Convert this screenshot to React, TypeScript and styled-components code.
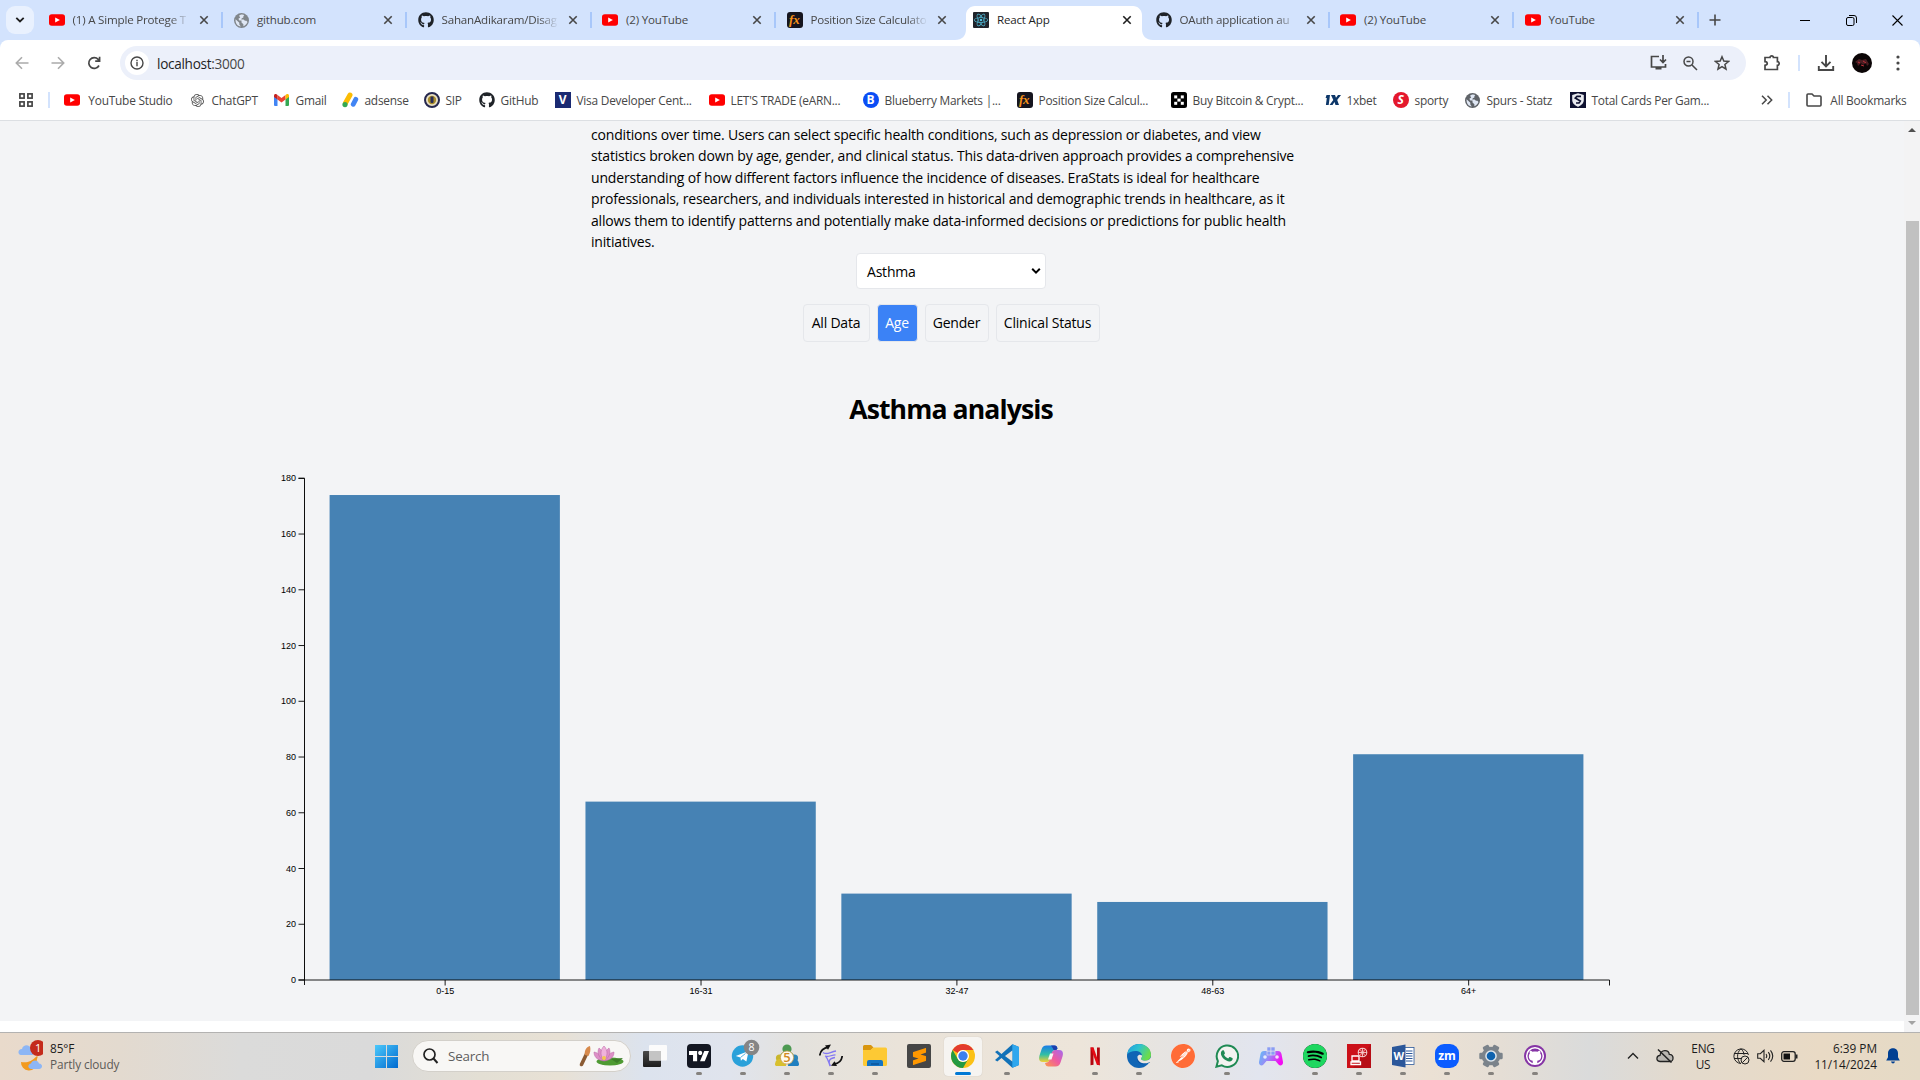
import React from 'react';
import styled, { createGlobalStyle, css } from 'styled-components';
import { FaGithub } from 'react-icons/fa';
import { SiOpenai, SiTradingview, SiSublimetext, SiPostman, SiSpotify, SiReact } from 'react-icons/si';

const Global = createGlobalStyle`
  *{box-sizing:border-box}
  html,body{margin:0;padding:0;overflow:hidden;background:#fff}
  svg{display:block;flex:none}
`;
const ui = `'Open Sans','Noto Sans',sans-serif`;

const Screen = styled.div`width:1920px;height:1080px;display:flex;flex-direction:column;overflow:hidden;font-family:${ui};`;

/* ---------- tab strip ---------- */
const TabStrip = styled.div`height:40px;background:#d3e3fd;display:flex;flex:none;`;
const TabSearch = styled.div`width:28px;height:28px;margin:6px 4px 0 6px;border-radius:9px;background:#e9f1fe;display:flex;align-items:center;justify-content:center;`;
const TabCell = styled.div<{ $active?: boolean; $sep?: boolean }>`
  width:184.5px;height:40px;display:flex;align-items:center;padding:0 10px 0 ${p => (p.$active ? 12.5 : 10.5)}px;position:relative;flex:none;
  font-size:11.6px;letter-spacing:-.2px;color:${p => (p.$active ? '#1f1f1f' : '#474747')};
  ${p => p.$sep && css`&::after{content:'';position:absolute;right:0;top:12px;width:2px;height:16px;background:#a8c7fa;}`}
`;
const TabShape = styled.svg`position:absolute;left:-6px;top:6px;`;
const TabIcon = styled.div`width:16px;height:16px;margin-right:8px;display:flex;align-items:center;justify-content:center;position:relative;flex:none;`;
const TabText = styled.div<{ $fade?: boolean }>`
  width:118px;white-space:nowrap;position:relative;line-height:20px;
  ${p => p.$fade && css`mask-image:linear-gradient(90deg,#000 82%,transparent 99%);`}
`;
const TabClose = styled.div`width:16px;display:flex;justify-content:center;margin-left:5px;position:relative;`;
const NewTab = styled.div`width:32px;height:34px;margin-top:3px;display:flex;align-items:center;justify-content:center;`;
const WinButtons = styled.div`margin-left:auto;display:flex;height:40px;`;
const WinButton = styled.div`width:46px;height:40px;display:flex;align-items:center;justify-content:center;`;

/* ---------- toolbar ---------- */
const ToolArea = styled.div`background:#d3e3fd;flex:none;`;
const ToolInner = styled.div`background:#fff;border-radius:8px 8px 0 0;height:80px;`;
const ToolRow = styled.div`height:46px;padding-top:6px;display:flex;align-items:flex-start;`;
const NavSlot = styled.div<{ $w: number }>`width:${p => p.$w}px;height:34px;display:flex;align-items:center;justify-content:center;flex:none;`;
const Omnibox = styled.div`width:1626px;flex:none;height:34px;border-radius:17px;background:#ecf0fa;display:flex;align-items:center;padding-left:5px;font-size:13.6px;letter-spacing:-.3px;color:#474747;`;
const InfoDot = styled.div`width:24px;height:24px;border-radius:12px;background:#fff;display:flex;align-items:center;justify-content:center;margin-right:8px;`;
const HostName = styled.span`color:#1f1f1f;`;
const OmniActions = styled.div`margin-left:auto;display:flex;align-items:center;gap:16px;padding-right:16px;`;
const Rule = styled.div<{ $h: number }>`width:2px;height:${p => p.$h}px;background:#d3e3fd;flex:none;`;
const Avatar = styled.div`width:20px;height:20px;border-radius:10px;overflow:hidden;background:#0b0506;`;

const BookmarkRow = styled.div`height:28px;display:flex;align-items:center;padding-left:18px;font-size:11.9px;letter-spacing:-.24px;color:#474747;`;
const Bookmark = styled.div<{ $w: number }>`width:${p => p.$w}px;display:flex;align-items:center;gap:6px;white-space:nowrap;flex:none;`;
const BookIcon = styled.div`width:16px;height:16px;display:flex;align-items:center;justify-content:center;flex:none;`;
const BadgeIcon = styled.div<{ $bg: string; $r?: number }>`width:16px;height:16px;border-radius:${p => p.$r ?? 0}px;background:${p => p.$bg};color:#fff;display:flex;align-items:center;justify-content:center;font:700 12px/16px ${ui};`;

/* ---------- page ---------- */
const Viewport = styled.div`height:912px;flex:none;display:flex;border-top:1px solid #dcdfe3;`;
const PageColumn = styled.div`width:1904px;background:#fff;`;
const Page = styled.main`height:900px;padding-right:2px;background:#f3f4f6;display:flex;flex-direction:column;align-items:center;color:#000;overflow:hidden;`;
const Intro = styled.p`margin:2.5px 0 0;width:720px;font-size:14px;line-height:21.6px;letter-spacing:-.18px;white-space:nowrap;height:129.5px;flex:none;`;
const SelectBox = styled.div`width:190px;height:36px;flex:none;border:1px solid #e5e7eb;border-radius:4px;background:#fff;display:flex;align-items:center;justify-content:space-between;padding:0 4px 0 10px;font-size:14px;letter-spacing:-.2px;`;
const Filters = styled.div`display:flex;gap:7px;margin-top:15px;`;
const Filter = styled.button<{ $w: number; $on?: boolean }>`
  width:${p => p.$w}px;height:38px;padding:0;border:1px solid #e5e7eb;border-radius:4px;
  background:${p => (p.$on ? '#3b82f6' : 'transparent')};color:${p => (p.$on ? '#fff' : '#000')};
  font:14px/20px ${ui};letter-spacing:-.2px;white-space:nowrap;
`;
const Title = styled.h2`margin:47px 0 0;font:700 26.6px/40px ${ui};letter-spacing:-.9px;white-space:nowrap;`;
const Chart = styled.svg`margin:31px 0 0 2px;font-family:'Liberation Sans',Arial,sans-serif;font-size:9px;`;
const ScrollTrack = styled.div`width:16px;background:#f3f3f4;display:flex;flex-direction:column;align-items:center;padding:5px 0 4px;`;
const ScrollThumb = styled.div`width:13px;height:794px;margin:87px 0 auto;background:#c1c1c1;flex:none;`;

/* ---------- taskbar ---------- */
const Taskbar = styled.footer`
  height:48px;flex:none;border-top:1px solid #b3b2b1;display:flex;align-items:center;color:#1b1b1b;
  background:linear-gradient(90deg,#e9dacb 0,#e3dacf 120px,#dbdbda 240px,#dadada 370px,#e3dfd4 480px,#e8e1d5 560px,#dce3ee 645px,#e0e4ed 730px,#e4e2dd 800px,#eae3d9 900px,#ede5da 1080px,#e6e4e2 1170px,#e2e5ef 1260px,#e5e3e3 1330px,#ebe1d4 1430px,#e5ded5 1500px,#dadbdb 1590px,#e3dacd 1680px,#e9dac5 1820px,#e5dac6 1920px);
`;
const Weather = styled.div`width:356px;padding:0 0 2px 18px;display:flex;gap:7px;align-items:center;font-size:11.8px;line-height:16px;letter-spacing:-.1px;`;
const Muted = styled.div`color:#5c5a58;`;
const StartButton = styled.div`width:56px;display:flex;justify-content:flex-start;padding-left:19px;`;
const SearchPill = styled.div`width:219px;height:32px;margin-bottom:1px;border-radius:16px;background:#f8f7f5;border:1px solid #d3d0ca;display:flex;align-items:center;padding:0 5px 0 10px;font-size:13.4px;letter-spacing:-.2px;color:#5e5e5e;`;
const SearchLabel = styled.span`margin-left:9px;flex:1;`;
const Apps = styled.div`display:flex;margin-left:2px;`;
const AppSlot = styled.div`
  width:44px;height:47px;display:flex;flex-direction:column;align-items:center;padding-top:4px;flex:none;
`;
const AppTile = styled.div<{ $on?: boolean }>`
  width:38px;height:39px;padding-top:7px;display:flex;flex-direction:column;align-items:center;border-radius:4px;
  background:${p => (p.$on ? '#f6f4f1' : 'transparent')};box-shadow:${p => (p.$on ? '0 0 1px #b9b4ac' : 'none')};
`;
const Mark = styled.div<{ $on?: boolean }>`margin-top:4px;width:${p => (p.$on ? 16 : 6)}px;height:3px;border-radius:2px;background:${p => (p.$on ? '#0078d4' : '#85827e')};`;
const Square = styled.div<{ $bg: string; $fg?: string; $r?: number }>`width:24px;height:24px;border-radius:${p => p.$r ?? 2}px;background:${p => p.$bg};color:${p => p.$fg ?? '#fff'};display:flex;align-items:center;justify-content:center;font:700 12px/24px ${ui};flex:none;`;
const Tray = styled.div`margin-left:auto;display:flex;align-items:center;height:47px;padding-bottom:1px;font-size:11.8px;line-height:16px;`;
const TraySlot = styled.div<{ $w: number }>`width:${p => p.$w}px;display:flex;justify-content:center;flex:none;`;
const Lang = styled.div`width:32px;margin-right:14px;text-align:center;letter-spacing:-.2px;`;
const Clock = styled.div`width:80px;text-align:right;letter-spacing:0;white-space:nowrap;`;

/* ---------- icons ---------- */
const YT = () => (
  <svg width="16" height="16" viewBox="0 0 16 16"><rect y="2.2" width="16" height="11.6" rx="2.8" fill="#f00" /><path d="M6.2 5.4v5.2L10.9 8z" fill="#fff" /></svg>
);
const Globe = ({ c = '#80868b', s = 15 }: { c?: string; s?: number }) => (
  <svg width={s} height={s} viewBox="0 0 24 24"><circle cx="12" cy="12" r="12" fill={c} /><path d="M2.5 10l6 5.5v3l2.4 3C5.500 21 2 16.800 2.500 10zM8 4.500c3-3 6.500-2 8.500-1.500l-1.500 2v2l-2.500 1.500-1 2h3.800l2.200 2h2.300l1.800 1.800C20.500 17.500 17 20.700 15 21v-3l-3-3v-3H8.500L7 9.200l3-2.200z" fill="#dfe7f4" /></svg>
);
const X = ({ c = '#474747' }: { c?: string }) => (
  <svg width="10" height="10" viewBox="0 0 10 10"><path d="M1.300 1.300l7.400 7.400M8.700 1.300l-7.400 7.400" stroke={c} strokeWidth="1.600" /></svg>
);
const Fx = () => (
  <svg width="16" height="16" viewBox="0 0 16 16"><rect width="16" height="16" rx="3" fill="#15151f" /><text x="2" y="11.800" fill="#f7931a" fontFamily="Liberation Serif, serif" fontStyle="italic" fontWeight="700" fontSize="13">fx</text></svg>
);
const ReactTile = styled.div`width:16px;height:16px;border-radius:1px;background:#20232a;color:#53c1de;display:flex;align-items:center;justify-content:center;`;
const Adsense = () => (
  <svg width="17" height="16" viewBox="0 0 17 16"><path d="M8 3L3.500 11" stroke="#fbbc04" strokeWidth="5" strokeLinecap="round" /><circle cx="3" cy="12.600" r="2.600" fill="#34a853" /><path d="M13.800 7.300l-2.600 5" stroke="#4285f4" strokeWidth="4.800" strokeLinecap="round" /></svg>
);
const Gmail = () => (
  <svg width="15" height="12" viewBox="0 0 15 12"><path d="M0 2v9a1 1 0 001 1h2.500V4.500z" fill="#4285f4" /><path d="M15 2v9a1 1 0 01-1 1h-2.500V4.500z" fill="#34a853" /><path d="M3.500 1L7.500 4l4-3v4.500l-4 3-4-3z" fill="#ea4335" /><path d="M0 1.800C0 0 2-.5 3.500 1v4.500L0 3z" fill="#c5221f" /><path d="M15 1.800C15 0 13-.5 11.500 1v4.500L15 3z" fill="#fbbc04" /></svg>
);
const Sip = () => (
  <svg width="16" height="16" viewBox="0 0 16 16"><circle cx="8" cy="8" r="7" fill="#e9e1c4" stroke="#26284f" strokeWidth="2" /><circle cx="8" cy="8" r="4.200" fill="#a98c2b" /><rect x="6.500" y="4.500" width="3" height="6.500" rx="1" fill="#2b2d55" /></svg>
);
const Okx = () => (
  <svg width="16" height="16" viewBox="0 0 16 16"><rect width="16" height="16" rx="2.500" fill="#000" /><g fill="#fff"><rect x="3.200" y="3.400" width="3" height="3" /><rect x="9.800" y="3.400" width="3" height="3" /><rect x="6.400" y="6.600" width="3.200" height="3" /><rect x="3.200" y="9.800" width="3" height="3" /><rect x="9.800" y="9.800" width="3" height="3" /></g></svg>
);
const OneX = () => (
  <svg width="16" height="12" viewBox="0 0 16 12"><path d="M1.500 1H5L3.700 11H.9L1.800 4H.6z" fill="#0d3769" /><path d="M6 1h4l1 2.700L13 1h3l-3.800 5L14 11h-3.500L9.500 8 7.500 11h-3L8.300 6z" fill="#0d3769" /></svg>
);
const Shield = () => (
  <svg width="16" height="16" viewBox="0 0 16 16"><rect width="16" height="16" fill="#0e1130" /><path d="M8 1.200l5.800 1.800v5c0 3.500-3 5.600-5.800 6.900C5.200 13.600 2.200 11.500 2.200 8V3z" fill="#e9ebf0" /><path d="M11 4.300H7L5.300 6l5 3-1.300 2H6" stroke="#0e1130" strokeWidth="1.700" fill="none" /></svg>
);
const stroke = { fill: 'none', stroke: '#474747', strokeWidth: 1.7 } as const;

const TaskView = () => (
  <svg width="24" height="24" viewBox="0 0 24 24"><defs><linearGradient id="tv" x1="0" y1="0" x2="0" y2="1"><stop offset="0" stopColor="#4a4a4a" /><stop offset="1" stopColor="#1c1c1c" /></linearGradient></defs><rect x="0" y="7" width="18" height="16" rx="1" fill="url(#tv)" /><rect x="6" y="1" width="18" height="15.500" rx="1" fill="#fbfbfb" /><rect x="6" y="7" width="12" height="9.500" fill="#c4c4c4" /></svg>
);
const TelegramMark = styled.svg`overflow:visible;margin:-4px 0 0 5px;`;
const Telegram = () => (
  <TelegramMark width="28" height="28" viewBox="0 0 28 28"><circle cx="10.500" cy="16" r="10.700" fill="#2aa1da" /><path d="M3.800 16l12.800-5-2.200 10.600-3.600-2.700-1.900 1.800-.5-3.200z" fill="#fff" /><path d="M8.500 17.500l5-4" stroke="#2aa1da" strokeWidth=".8" /><circle cx="19.500" cy="7.500" r="7.800" fill="#858585" /><text x="19.500" y="11.300" textAnchor="middle" fontSize="10.500" fill="#fff" fontFamily="Open Sans, sans-serif">8</text></TelegramMark>
);
const Meta5 = () => (
  <svg width="24" height="24" viewBox="0 0 24 24"><circle cx="12" cy="5" r="4.600" fill="#4d9a52" /><path d="M5 14c0-5 3-7 7-7s7 2 7 7z" fill="#4d9a52" /><circle cx="4.500" cy="14" r="3.600" fill="#c9b62c" /><path d="M0 21c0-4 2-6 5-6s6 2 6 7H1z" fill="#d8c02e" /><circle cx="19.500" cy="14" r="3.600" fill="#2f86b8" /><path d="M24 21c0-4-2-6-5-6s-6 2-6 7h10z" fill="#1f7fc0" /><circle cx="12" cy="13.500" r="6.600" fill="#fdfaf1" stroke="#c79a4a" strokeWidth=".8" /><text x="12" y="18.200" textAnchor="middle" fontSize="13" fontWeight="600" fill="#d28a24" fontFamily="Open Sans, sans-serif">5</text></svg>
);
const Sync = () => (
  <svg width="24" height="24" viewBox="0 0 24 24"><path d="M.8 11.500C1.300 7 4.500 4 9.500 3.200" stroke="#111" strokeWidth="1.800" fill="none" /><path d="M6 1.500l6-1-3 5.300z" fill="#111" /><path d="M23.200 12c-.5 4.500-3.700 7.500-8.200 8" stroke="#111" strokeWidth="1.800" fill="none" /><path d="M18 22l-6-.2 3.500-4.600z" fill="#111" /><path d="M4 8.500c3.500 3 7-.5 13-1.500M6 12c3.500 1.500 6-1 10.500-1.200M11.500 22C9 18 9.500 14.500 16 13.500M11 22c-1.500-4-2-7.500-4.500-10" stroke="#8277f2" strokeWidth="1.300" fill="none" /></svg>
);
const Folder = () => (
  <svg width="24" height="24" viewBox="0 0 24 24"><path d="M0 2.500Q0 1 1.500 1H8l2.500 2.500L8 6H0z" fill="#d9960f" /><path d="M0 6h7.500l3-2.500H22.500Q24 3.500 24 5v15.500q0 1.500-1.500 1.500h-21Q0 22 0 20.500z" fill="#fdc934" /><path d="M4 22v-4q0-2 2-2h12q2 0 2 2v4z" fill="#1474c4" /><path d="M8 20h8" stroke="#0b559b" strokeWidth="1.500" /></svg>
);
const ChromeIcon = () => (
  <svg width="24" height="24" viewBox="0 0 24 24"><circle cx="12" cy="12" r="12" fill="#fbc116" /><path d="M1.610 6A12 12 0 0122.390 6H12a6 6 0 00-5.200 3z" fill="#e33b2e" /><path d="M1.610 6A12 12 0 0012 24l5.200-9a6 6 0 01-10.400 0z" fill="#249a43" /><circle cx="12" cy="12" r="6" fill="#fff" /><circle cx="12" cy="12" r="4.700" fill="#3c7fee" /></svg>
);
const VsCode = () => (
  <svg width="24" height="24" viewBox="0 0 24 24"><path d="M17.300.3L24 3v18l-6.700 2.700L6.500 14l-4.200 3.400L0 16l4.500-4L0 8l2.300-1.400L6.500 10z" fill="#1272b8" /><path d="M17.300.3L24 3v18l-6.700 2.700z" fill="#2fa7ee" /><path d="M17.300 6.500v11L10 12z" fill="#eae4da" /></svg>
);
const Copilot = () => (
  <svg width="24" height="24" viewBox="0 0 24 24"><defs><linearGradient id="cp1" x1="0" y1="0" x2="0" y2="1"><stop offset="0" stopColor="#1a7ce8" /><stop offset=".55" stopColor="#31bfa5" /><stop offset="1" stopColor="#f4cf31" /></linearGradient><linearGradient id="cp2" x1="1" y1="0" x2="0" y2="1"><stop offset="0" stopColor="#a36bf0" /><stop offset=".5" stopColor="#ef5aa0" /><stop offset="1" stopColor="#fb9a4b" /></linearGradient></defs><path d="M7.500 1.500h8c2 0 2.500 1 3 3L17 6c-2 0-3 .6-3.700 2.600L11.500 15c-.6 2-1.500 3-3.500 3H4c-4 0-4.500-3-3.500-6.500L2.500 5.500c.8-2.600 2.300-4 5-4z" fill="url(#cp1)" /><path d="M12 1.500h3.500c2 0 2.500 1 3 3L17 6.400c-2 0-3-.4-3-2z" fill="#1d3fae" /><path d="M16.500 22.500h-7c-2 0-3-1-3.500-3.500 3-.2 4-1 4.700-3.400l1.800-6.200C13.100 7.300 14.500 6 17 6h3c4 0 4.500 3 3.500 6.500l-2 6c-.8 2.600-2.300 4-5 4z" fill="url(#cp2)" /><path d="M11 9.500h3.500l-2 6H9z" fill="#f7f3f2" /></svg>
);
const Netflix = () => (
  <svg width="24" height="24" viewBox="0 0 24 24"><path d="M7.500 3.500h3v17.200l-3 .5zM14 3.500h2.800v17.700l-2.800-.5z" fill="#b1060f" /><path d="M7.500 3.500h3l6.300 17.700-3-.5z" fill="#e50914" /></svg>
);
const Edge = () => (
  <svg width="24" height="24" viewBox="0 0 24 24"><defs><linearGradient id="eg" x1="0" y1="0" x2="1" y2=".4"><stop offset="0" stopColor="#1f9ee0" /><stop offset=".5" stopColor="#2ec3cf" /><stop offset="1" stopColor="#6bdc4b" /></linearGradient></defs><circle cx="12" cy="12" r="12" fill="#1065b5" /><path d="M.2 10.500C1 4.500 6 0 12 0c7 0 12 5 12 10.700 0 4-3 6-6.200 6-2.600 0-4-1-3.800-2.100.2-.9 1.100-1 1.100-3C15 9 12 7 8.500 7 4.800 7 1.500 8.500.2 10.500z" fill="url(#eg)" /><path d="M10.500 12c-1 4 2.500 8 7 7.800 2 0 4-.8 5-1.500.8-.3.600.3.300.700l-.8-.2C18 21 13 20.500 11 17.500 9.800 15.800 9.700 13.500 10.500 12z" fill="#0b4d9d" /><path d="M10.500 12.300c-.6 4.200 3 7 7.500 7 2.200 0 4-.6 6-2.100l.5-5.200c-1.200 3.700-3.700 4.700-6.700 4.700-2.600 0-4-1-3.800-2.100.2-.9 1.100-1 1.100-3-1.600-1.300-3.600-1.300-4.600.7z" fill="#ebe6e0" /></svg>
);
const WhatsApp = () => (
  <svg width="24" height="24" viewBox="0 0 24 24"><path d="M1.400 22.700l1.500-5.600A10.700 10.700 0 116.800 21.300z" fill="#f3f3f0" stroke="#1f8a54" strokeWidth="2" /><path d="M8 6.200c.5 0 .8 0 1 .6l.9 2.100c.1.400 0 .7-.3 1l-.6.800c1 1.800 2.300 3 4.200 3.800l1-1.200c.3-.3.500-.4.900-.2l2.200 1c.4.200.5.500.4 1-.3 1.600-1.700 2.500-3.200 2.400-4-.4-8.700-4.500-8.600-8.300 0-1.400.9-3 2.100-3z" fill="#1f8a54" /></svg>
);
const Gamepad = () => (
  <svg width="24" height="24" viewBox="0 0 24 24"><defs><linearGradient id="gp" x1="0" y1="0" x2="1" y2=".3"><stop offset="0" stopColor="#62bff5" /><stop offset=".5" stopColor="#9b86f7" /><stop offset="1" stopColor="#f30df2" /></linearGradient></defs><path d="M5 7h14c2 0 3 1 3.500 3L24 18c.4 3-2.500 4.500-4.500 2.500L16.500 17h-9l-3 3.500C2.500 22.500-.4 21 0 18l1.500-8C2 8 3 7 5 7z" fill="url(#gp)" /><g fill="#8a9df5" stroke="#e5e4ea" strokeWidth=".6"><rect x="8" y="7" width="4" height="4" /><rect x="12" y="7" width="4" height="4" /><rect x="8" y="3" width="4" height="4" /><rect x="12" y="3" width="4" height="4" /></g><circle cx="6" cy="13" r="1.800" fill="#e6ecfb" /><circle cx="18" cy="13" r="1.800" fill="#f5e0fb" /></svg>
);
const RedNet = () => (
  <svg width="24" height="24" viewBox="0 0 24 24"><rect width="24" height="24" fill="#cc1018" /><path d="M24 0v24H6z" fill="#a80b14" opacity=".6" /><path d="M5 12h7v5H5zM4 18h9.500v2.500H4z" fill="none" stroke="#fff" strokeWidth="1.300" /><circle cx="15.500" cy="8.500" r="4.300" fill="none" stroke="#f3cccc" strokeWidth="1.100" /><path d="M15.500 4v9M11 8.500h9M13 5.500c2 2 2 4 0 6M18 5.500c-2 2-2 4 0 6" fill="none" stroke="#f3cccc" strokeWidth=".9" /></svg>
);
const Word = () => (
  <svg width="24" height="24" viewBox="0 0 24 24"><rect x="12" y="3.500" width="11" height="17" fill="#fff" stroke="#2b579a" strokeWidth=".8" /><path d="M15 7h6.500M15 9.500h6.500M15 12h6.500M15 14.500h6.500M15 17h6.500" stroke="#2b579a" strokeWidth="1" /><path d="M1 3l13.500-2.500v23L1 21z" fill="#2b579a" /><text x="7.700" y="16" textAnchor="middle" fontSize="11" fontWeight="700" fill="#fff" fontFamily="Open Sans, sans-serif">W</text></svg>
);
const Gear = () => (
  <svg width="24" height="24" viewBox="0 0 24 24"><g fill="#7b838b">{[0, 60, 120].map(a => <rect key={a} x="8.700" y="0.300" width="6.600" height="23.400" rx="1.400" transform={`rotate(${a + 30} 12 12)`} />)}<circle cx="12" cy="12" r="9.300" /></g><circle cx="12" cy="12" r="5.800" fill="#dfe6ec" /><circle cx="12" cy="12" r="4.300" fill="#0f62ae" /></svg>
);
const GitDesk = styled.div`width:24px;height:24px;display:flex;align-items:center;justify-content:center;`;
const GitDeskDisc = styled.div`width:22px;height:22px;border-radius:11px;background:#8534a5;color:#fff;display:flex;align-items:center;justify-content:center;`;
const GitCat = () => (
  <svg width="22" height="22" viewBox="0 0 22 22"><circle cx="11" cy="11" r="8.300" fill="none" stroke="#fff" strokeWidth="1.500" /><path d="M8.700 19v-3.200c-3-.5-3.900-2.400-3.900-4.600 0-1.200.4-2 1-2.700-.3-1-.2-2 .1-2.800 1.200 0 2 .5 2.800 1.100 1.500-.4 3.100-.4 4.600 0 .8-.6 1.600-1.100 2.800-1.100.3.800.4 1.800.1 2.800.6.700 1 1.500 1 2.700 0 2.200-.9 4.100-3.900 4.600V19z" fill="#fff" /></svg>
);

const tabs: { icon: React.ReactNode; text: string; fade?: boolean; active?: boolean; sep?: boolean }[] = [
  { icon: <YT />, text: '(1) A Simple Protege T', fade: true, sep: true },
  { icon: <Globe />, text: 'github.com', sep: true },
  { icon: <FaGithub size={16} color="#1f2328" />, text: 'SahanAdikaram/Disag', fade: true, sep: true },
  { icon: <YT />, text: '(2) YouTube', sep: true },
  { icon: <Fx />, text: 'Position Size Calculato', fade: true },
  { icon: <ReactTile><SiReact size={14} /></ReactTile>, text: 'React App', active: true },
  { icon: <FaGithub size={16} color="#1f2328" />, text: 'OAuth application au', fade: true, sep: true },
  { icon: <YT />, text: '(2) YouTube', sep: true },
  { icon: <YT />, text: 'YouTube', sep: true },
];

const bookmarks: [number, React.ReactNode, string][] = [
  [126, <YT />, 'YouTube Studio'],
  [84, <SiOpenai size={13} color="#555" />, 'ChatGPT'],
  [69, <Gmail />, 'Gmail'],
  [81, <Adsense />, 'adsense'],
  [55, <Sip />, 'SIP'],
  [76, <FaGithub size={16} color="#1f2328" />, 'GitHub'],
  [154, <BadgeIcon $bg="#1a2a72">V</BadgeIcon>, 'Visa Developer Cent...'],
  [154, <YT />, "LET'S TRADE (eARN..."],
  [154, <BadgeIcon $bg="#0b4df5" $r={8}>B</BadgeIcon>, 'Blueberry Markets |...'],
  [154, <Fx />, 'Position Size Calcul...'],
  [154, <Okx />, 'Buy Bitcoin & Crypt...'],
  [68, <OneX />, '1xbet'],
  [72, <BadgeIcon $bg="#e4182c" $r={8}><i>S</i></BadgeIcon>, 'sporty'],
  [105, <Globe c="#5f6368" />, 'Spurs - Statz'],
  [184, <Shield />, 'Total Cards Per Gam...'],
];

const apps: { icon: React.ReactNode; run?: boolean; on?: boolean }[] = [
  { icon: <TaskView /> },
  { icon: <Square $bg="#131722" $r={4}><SiTradingview size={20} /></Square>, run: true },
  { icon: <Telegram />, run: true },
  { icon: <Meta5 />, run: true },
  { icon: <Sync />, run: true },
  { icon: <Folder />, run: true },
  { icon: <Square $bg="#464646" $fg="#ff9800"><SiSublimetext size={17} /></Square> },
  { icon: <ChromeIcon />, run: true, on: true },
  { icon: <VsCode />, run: true },
  { icon: <Copilot /> },
  { icon: <Netflix />, run: true },
  { icon: <Edge />, run: true },
  { icon: <Square $bg="#fff" $fg="#ff6c37" $r={12}><SiPostman size={24} /></Square> },
  { icon: <WhatsApp />, run: true },
  { icon: <Gamepad /> },
  { icon: <Square $bg="#000" $fg="#1ed760" $r={12}><SiSpotify size={24} /></Square>, run: true },
  { icon: <RedNet />, run: true },
  { icon: <Word />, run: true },
  { icon: <Square $bg="#0b5cff" $r={9}>zm</Square>, run: true },
  { icon: <Gear />, run: true },
  { icon: <GitDesk><GitDeskDisc><GitCat /></GitDeskDisc></GitDesk>, run: true },
];

const data = [
  { label: '0-15', value: 174 }, { label: '16-31', value: 64 }, { label: '32-47', value: 31 },
  { label: '48-63', value: 28 }, { label: '64+', value: 81 },
];

function BarChart() {
  const x0 = 34, top = 18.3, base = 520, step = 1305 / 5.1, band = step * 0.9, unit = (base - top) / 180;
  return (
    <Chart width="1364" height="544" viewBox="0 0 1364 544">
      {data.map((d, i) => (
        <rect key={d.label} x={x0 + step * (0.1 + i)} y={base - d.value * unit} width={band} height={d.value * unit} fill="steelblue" />
      ))}
      <path d={`M${x0 + .5} ${base + 5}V${base}H${x0 + 1305.5}V${base + 5.5}`} stroke="#000" strokeWidth=".9" fill="none" />
      <path d={`M${x0 - 5.5} ${top}H${x0 + .5}V${base}H${x0 - 5.5}`} stroke="#000" strokeWidth=".95" fill="none" />
      {data.map((d, i) => {
        const cx = x0 + step * (0.1 + i) + band / 2 + .4;
        return <g key={d.label}><path d={`M${cx} ${base}v5.500`} stroke="#000" strokeWidth=".9" /><text x={cx} y={base + 14} textAnchor="middle">{d.label}</text></g>;
      })}
      {[0, 20, 40, 60, 80, 100, 120, 140, 160, 180].map(v => (
        <g key={v}><path d={`M${x0 - 5.5} ${base - v * unit}h6`} stroke="#000" strokeWidth=".9" /><text x={x0 - 8} y={base - v * unit + 3} textAnchor="end">{v}</text></g>
      ))}
    </Chart>
  );
}

export default function App() {
  return (
    <Screen>
      <Global />
      <TabStrip>
        <TabSearch><svg width="10" height="8" viewBox="0 0 10 8"><path d="M1.300 1.800L5 5.500l3.700-3.700" fill="none" stroke="#1f1f1f" strokeWidth="1.800" /></svg></TabSearch>
        {tabs.map((t, i) => (
          <TabCell key={i} $active={t.active} $sep={t.sep}>
            {t.active && <TabShape width="198" height="34" viewBox="0 0 198 34"><path d="M0 34c7 0 11-4 11-11V9c0-5 4-9 9-9h158c5 0 9 4 9 9v14c0 7 4 11 11 11z" fill="#fff" /></TabShape>}
            <TabIcon>{t.icon}</TabIcon>
            <TabText $fade={t.fade}>{t.text}</TabText>
            <TabClose><X c={t.active ? '#1f1f1f' : '#474747'} /></TabClose>
          </TabCell>
        ))}
        <NewTab><svg width="12" height="12" viewBox="0 0 12 12"><path d="M6 .5v11M.5 6h11" stroke="#474747" strokeWidth="1.600" /></svg></NewTab>
        <WinButtons>
          <WinButton><svg width="10" height="10" viewBox="0 0 10 10"><path d="M0 5.500h10" stroke="#000" /></svg></WinButton>
          <WinButton><svg width="11" height="11" viewBox="0 0 11 11"><rect x=".5" y="2.500" width="7.500" height="8" rx="1.500" fill="none" stroke="#000" /><path d="M3 .5h5q2.500 0 2.500 2.500v5" fill="none" stroke="#000" /></svg></WinButton>
          <WinButton><svg width="11" height="11" viewBox="0 0 11 11"><path d="M.5.5l10 10M10.500.5l-10 10" stroke="#000" strokeWidth="1.100" /></svg></WinButton>
        </WinButtons>
      </TabStrip>

      <ToolArea><ToolInner>
        <ToolRow>
          <NavSlot $w={44}><svg width="14" height="14" viewBox="0 0 14 14"><path d="M13.500 7H1.500M7 1.200L1.300 7 7 12.800" fill="none" stroke="#ababab" strokeWidth="1.600" /></svg></NavSlot>
          <NavSlot $w={28}><svg width="14" height="14" viewBox="0 0 14 14"><path d="M.5 7h12M7 1.200L12.700 7 7 12.800" fill="none" stroke="#ababab" strokeWidth="1.600" /></svg></NavSlot>
          <NavSlot $w={44}><svg width="14" height="14" viewBox="0 0 14 14"><path d="M12 9.500A5.400 5.400 0 1111.200 3.400L12.500 5M12.600.8v4.400H8.200" fill="none" stroke="#474747" strokeWidth="1.700" /></svg></NavSlot>
          <NavSlot $w={4} />
          <Omnibox>
            <InfoDot><svg width="14" height="14" viewBox="0 0 14 14"><circle cx="7" cy="7" r="6" fill="none" stroke="#474747" strokeWidth="1.400" /><path d="M7 6v4.200M7 3.700v1.500" stroke="#474747" strokeWidth="1.400" /></svg></InfoDot>
            <span><HostName>localhost</HostName>:3000</span>
            <OmniActions>
              <svg width="17" height="16" viewBox="0 0 17 16"><path d="M9 1.500H1.500v10.500h14V9M13 0v7M10 4.500l3 3 3-3" {...stroke} /><path d="M5.500 12h6v2.500h-6z" fill="#474747" /></svg>
              <svg width="15" height="15" viewBox="0 0 15 15"><circle cx="5.500" cy="5.500" r="4.500" {...stroke} strokeWidth={1.500} /><path d="M3.500 5.500h4M9 9l5 5" {...stroke} strokeWidth={1.500} /></svg>
              <svg width="16" height="16" viewBox="0 0 16 16"><path d="M8 1.800l1.800 4.300 4.700.4-3.600 3 1.100 4.600L8 11.600l-4 2.500 1.100-4.600-3.600-3 4.700-.4z" {...stroke} strokeWidth={1.500} /></svg>
            </OmniActions>
          </Omnibox>
          <NavSlot $w={52}><svg width="18" height="18" viewBox="0 0 18 18"><path d="M2 3.500h5a1.700 1.700 0 013.400 0h4v4.200a1.800 1.800 0 010 3.600v4.200H2v-4.200c3-.4 3-3.200 0-3.600z" {...stroke} /></svg></NavSlot>
          <NavSlot $w={2}><Rule $h={16} /></NavSlot>
          <NavSlot $w={52}><svg width="18" height="18" viewBox="0 0 18 18"><path d="M9 1v11M4.500 7.800L9 12.300l4.500-4.500M1.800 12v4h14.400v-4" {...stroke} strokeWidth={1.900} /></svg></NavSlot>
          <NavSlot $w={20}><Avatar><svg width="20" height="20" viewBox="0 0 20 20"><path d="M3 9l4-3 3 1 4-1 3 5-2 2-1-3-3 2-2-2-3 3-1-3z" fill="#4a1d22" /><path d="M6 9l2 1M11 8l3 2M9 12l3 1" stroke="#c0303a" strokeWidth="1" /></svg></Avatar></NavSlot>
          <NavSlot $w={52}><svg width="4" height="16" viewBox="0 0 4 16"><g fill="#474747"><circle cx="2" cy="2" r="1.600" /><circle cx="2" cy="8" r="1.600" /><circle cx="2" cy="14" r="1.600" /></g></svg></NavSlot>
        </ToolRow>
        <BookmarkRow>
          <Bookmark $w={30}><svg width="16" height="16" viewBox="0 0 16 16"><g {...stroke}><rect x="1.900" y="1.900" width="4.200" height="4.200" /><rect x="9.900" y="1.900" width="4.200" height="4.200" /><rect x="1.900" y="9.900" width="4.200" height="4.200" /><rect x="9.900" y="9.900" width="4.200" height="4.200" /></g></svg></Bookmark>
          <Rule $h={16} />
          <Bookmark $w={13.5} />
          {bookmarks.map(([w, icon, text], i) => <Bookmark key={i} $w={w}><BookIcon>{icon}</BookIcon><span>{i === 0 ? '\u00a0' : ''}{text}</span></Bookmark>)}
          <Bookmark $w={34}><svg width="20" height="10" viewBox="-7 0 20 10"><path d="M1 .8L5.200 5 1 9.200M6.500.8L10.700 5 6.500 9.200" {...stroke} strokeWidth={1.500} /></svg></Bookmark>
          <Rule $h={16} />
          <Bookmark $w={16} />
          <Bookmark $w={110}><svg width="16" height="14" viewBox="0 0 16 14"><path d="M1 2Q1 1 2 1h4l2 2h6q1 0 1 1v8q0 1-1 1H2q-1 0-1-1z" {...stroke} strokeWidth={1.600} /></svg><span>&nbsp;All Bookmarks</span></Bookmark>
        </BookmarkRow>
      </ToolInner></ToolArea>

      <Viewport>
        <PageColumn>
          <Page>
            <Intro>
              conditions over time. Users can select specific health conditions, such as depression or diabetes, and view<br />
              statistics broken down by age, gender, and clinical status. This data-driven approach provides a comprehensive<br />
              understanding of how different factors influence the incidence of diseases. EraStats is ideal for healthcare<br />
              professionals, researchers, and individuals interested in historical and demographic trends in healthcare, as it<br />
              allows them to identify patterns and potentially make data-informed decisions or predictions for public health<br />
              initiatives.
            </Intro>
            <SelectBox>Asthma<svg width="10" height="8" viewBox="0 0 10 8"><path d="M1.200 1.800L5 5.600l3.800-3.800" fill="none" stroke="#000" strokeWidth="2" /></svg></SelectBox>
            <Filters>
              <Filter $w={67}>All Data</Filter>
              <Filter $w={41} $on>Age</Filter>
              <Filter $w={64}>Gender</Filter>
              <Filter $w={104}>Clinical Status</Filter>
            </Filters>
            <Title>Asthma analysis</Title>
            <BarChart />
          </Page>
        </PageColumn>
        <ScrollTrack>
          <svg width="8" height="8" viewBox="0 0 8 8"><path d="M4 2l4 4H0z" fill="#505050" /></svg>
          <ScrollThumb />
          <svg width="8" height="8" viewBox="0 0 8 8"><path d="M4 5L0 1h8z" fill="#a3a3a3" /></svg>
        </ScrollTrack>
      </Viewport>

      <Taskbar>
        <Weather>
          <svg width="25" height="32" viewBox="0 0 25 32"><path d="M2 18a8 8 0 0016 1c-1-5 2-6 0-7-6 6-10 7-16 6z" fill="#f29a1f" transform="translate(1 4)" /><path d="M3 15c-4-1-3-6 1-6 1-5 8-5 9 0 4 0 5 5 1 6z" fill="#8db6f5" /><path d="M13 29c-4-1-3-5 0-5.500 1-4 7-4 8 0 4 .5 4 5 0 5.500z" fill="#8db6f5" /><circle cx="20" cy="8" r="8" fill="#c42b1c" /><text x="20" y="12" textAnchor="middle" fill="#fff" fontSize="11" fontFamily="Open Sans, sans-serif">1</text></svg>
          <div><div>85°F</div><Muted>Partly cloudy</Muted></div>
        </Weather>
        <StartButton><svg width="23" height="23" viewBox="0 0 23 23"><defs><linearGradient id="win" x1="0" y1="0" x2="1" y2="1"><stop offset="0" stopColor="#4cc9fb" /><stop offset="1" stopColor="#0069cf" /></linearGradient></defs><path d="M0 0h11v11H0zM12 0h11v11H12zM0 12h11v11H0zM12 12h11v11H12z" fill="url(#win)" /></svg></StartButton>
        <SearchPill>
          <svg width="16" height="16" viewBox="0 0 16 16"><circle cx="6.500" cy="6.500" r="5.500" fill="none" stroke="#222" strokeWidth="1.700" /><path d="M10.500 10.500l4 4.500" stroke="#222" strokeWidth="2" /></svg>
          <SearchLabel>Search</SearchLabel>
          <svg width="46" height="24" viewBox="0 0 46 24"><path d="M2.500 20.500L7.500 10" stroke="#8a5a32" strokeWidth="3.600" strokeLinecap="round" /><path d="M6 11c-1-4 1-8 5-9 1 4 0 7-1.500 10z" fill="#d78a4c" /><ellipse cx="31" cy="17.500" rx="13.500" ry="4" fill="#4e9a32" /><path d="M32 15l12-1-6 5z" fill="#3c7e28" /><g fill="#dd8fc6" stroke="#b865a5" strokeWidth=".5"><path d="M25 17C17 16 15 12 15 8c5 1 8 4 10 9z" /><path d="M25 17c8-1 10-5 10-9-5 1-8 4-10 9z" /><path d="M25 17c-6-4-7-9-5-13 4 3 6 7 5 13z" /><path d="M25 17c6-4 7-9 5-13-4 3-6 7-5 13z" /><path d="M25 17c-4-5-4-11 0-15 4 4 4 10 0 15z" fill="#efb2db" /></g><circle cx="25" cy="14" r="2" fill="#f3c94e" /></svg>
        </SearchPill>
        <Apps>
          {apps.map((a, i) => (
            <AppSlot key={i}><AppTile $on={a.on}>{a.icon}{a.run && <Mark $on={a.on} />}</AppTile></AppSlot>
          ))}
        </Apps>
        <Tray>
          <TraySlot $w={20}><svg width="12" height="8" viewBox="0 0 12 8"><path d="M1 6.500l5-5 5 5" fill="none" stroke="#222" strokeWidth="1.400" /></svg></TraySlot>
          <TraySlot $w={44}><svg width="18" height="14" viewBox="0 0 18 14"><path d="M4 12.500C-.5 12 .3 6.500 4 6.300 5 .2 12.500.4 13.300 5.300c5 .2 4.700 6.900.7 7.200z" fill="#b9b6b1" stroke="#222" strokeWidth="1.300" /><path d="M2 .5l13.500 13" stroke="#222" strokeWidth="1.500" /></svg></TraySlot>
          <Lang>ENG<br />US</Lang>
          <TraySlot $w={16}><svg width="17" height="17" viewBox="0 0 17 17"><g fill="none" stroke="#222" strokeWidth="1"><path d="M8 15.500A7.300 7.300 0 1115.400 7M1 5.500h14M1 10.500h7M8 .8C3 5 4 12 7.500 15.500M8 .8c2 1.800 3 4 3 6" /><circle cx="12" cy="12" r="4" /><path d="M9.300 14.700l5.400-5.400" /></g></svg></TraySlot>
          <TraySlot $w={32}><svg width="17" height="14" viewBox="0 0 17 14"><g fill="none" stroke="#222" strokeWidth="1.100"><path d="M.7 4.700h2.600L7 1.300v11.400L3.300 9.300H.7z" /><path d="M9 5q1.500 2 0 4M11.300 3.200q3 3.800 0 7.600M13.500 1.300q4.500 5.700 0 11.400" /></g></svg></TraySlot>
          <TraySlot $w={16}><svg width="17" height="11" viewBox="0 0 17 11"><rect x=".7" y=".7" width="13.500" height="9.600" rx="2.200" fill="none" stroke="#222" strokeWidth="1.300" /><rect x="2.500" y="2.500" width="6.500" height="6" fill="#111" /><path d="M15.600 3.500v4" stroke="#222" strokeWidth="1.800" /></svg></TraySlot>
          <Clock>6:39 PM<br />11/14/2024</Clock>
          <TraySlot $w={31}><svg width="14" height="16" viewBox="0 0 14 16"><path d="M7 .3c3.200 0 5 2.300 5 5v4l1.800 3.200H.2L2 9.300v-4c0-2.700 1.800-5 5-5zM5 13.500h4q-.5 2-2 2t-2-2z" fill="#003f92" /></svg></TraySlot>
          <TraySlot $w={12} />
        </Tray>
      </Taskbar>
    </Screen>
  );
}
